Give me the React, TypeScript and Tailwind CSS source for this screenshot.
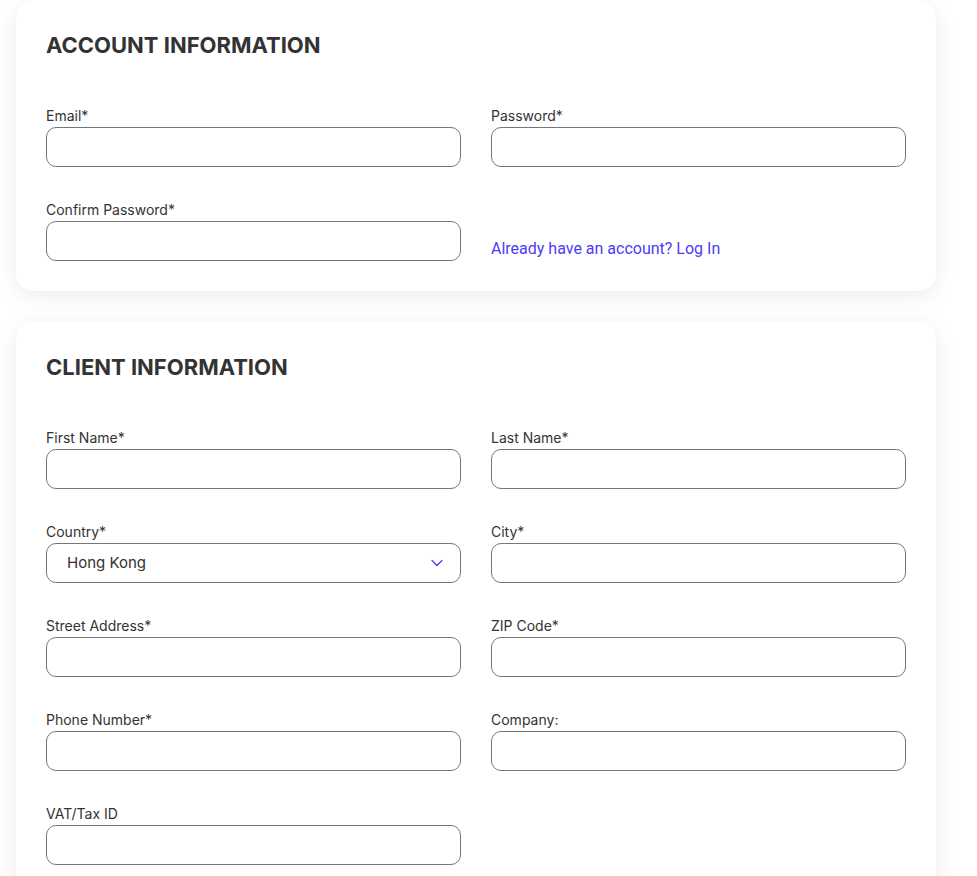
import { ChevronDown } from "lucide-react";

type Field = { label: string; select?: string };

function Input({ label, select }: Field) {
  return (
    <div className="flex flex-col">
      <label className="text-[14px] leading-[21px] text-[#333] mb-[1px]">{label}</label>
      {select ? (
        <div className="h-[40px] rounded-[10px] border border-[#777] flex items-center justify-between pl-[20px] pr-[13px]">
          <span className="text-[15px] text-[#333]">{select}</span>
          <ChevronDown className="w-[20px] h-[20px] text-[#4b3cf7]" strokeWidth={1.5} />
        </div>
      ) : (
        <input className="h-[40px] rounded-[10px] border border-[#777] outline-none px-4" />
      )}
    </div>
  );
}

function Card({ title, children }: { title: string; children: React.ReactNode }) {
  return (
    <section className="bg-white rounded-[18px] shadow-[0_4px_22px_rgba(0,0,0,0.08)] px-[30px] pt-[30px] pb-[30px]">
      <h2 className="text-[22px] leading-[30px] font-bold text-[#333]">{title}</h2>
      <div className="grid grid-cols-2 gap-x-[30px] gap-y-[32px] mt-[45px]">{children}</div>
    </section>
  );
}

export default function App() {
  return (
    <div className="min-h-screen bg-white font-['Inter',sans-serif]">
      <div className="w-[920px] ml-[16px] flex flex-col gap-[31px] pb-10">
        <Card title="ACCOUNT INFORMATION">
          <Input label="Email*" />
          <Input label="Password*" />
          <Input label="Confirm Password*" />
          <div className="flex items-end pb-[3px]">
            <a href="#" className="font-['Roboto',sans-serif] text-[16px] leading-[19px] text-[#4b3cf7]">
              Already have an account? Log In
            </a>
          </div>
        </Card>
        <Card title="CLIENT INFORMATION">
          <Input label="First Name*" />
          <Input label="Last Name*" />
          <Input label="Country*" select="Hong Kong" />
          <Input label="City*" />
          <Input label="Street Address*" />
          <Input label="ZIP Code*" />
          <Input label="Phone Number*" />
          <Input label="Company:" />
          <Input label="VAT/Tax ID" />
        </Card>
      </div>
    </div>
  );
}
